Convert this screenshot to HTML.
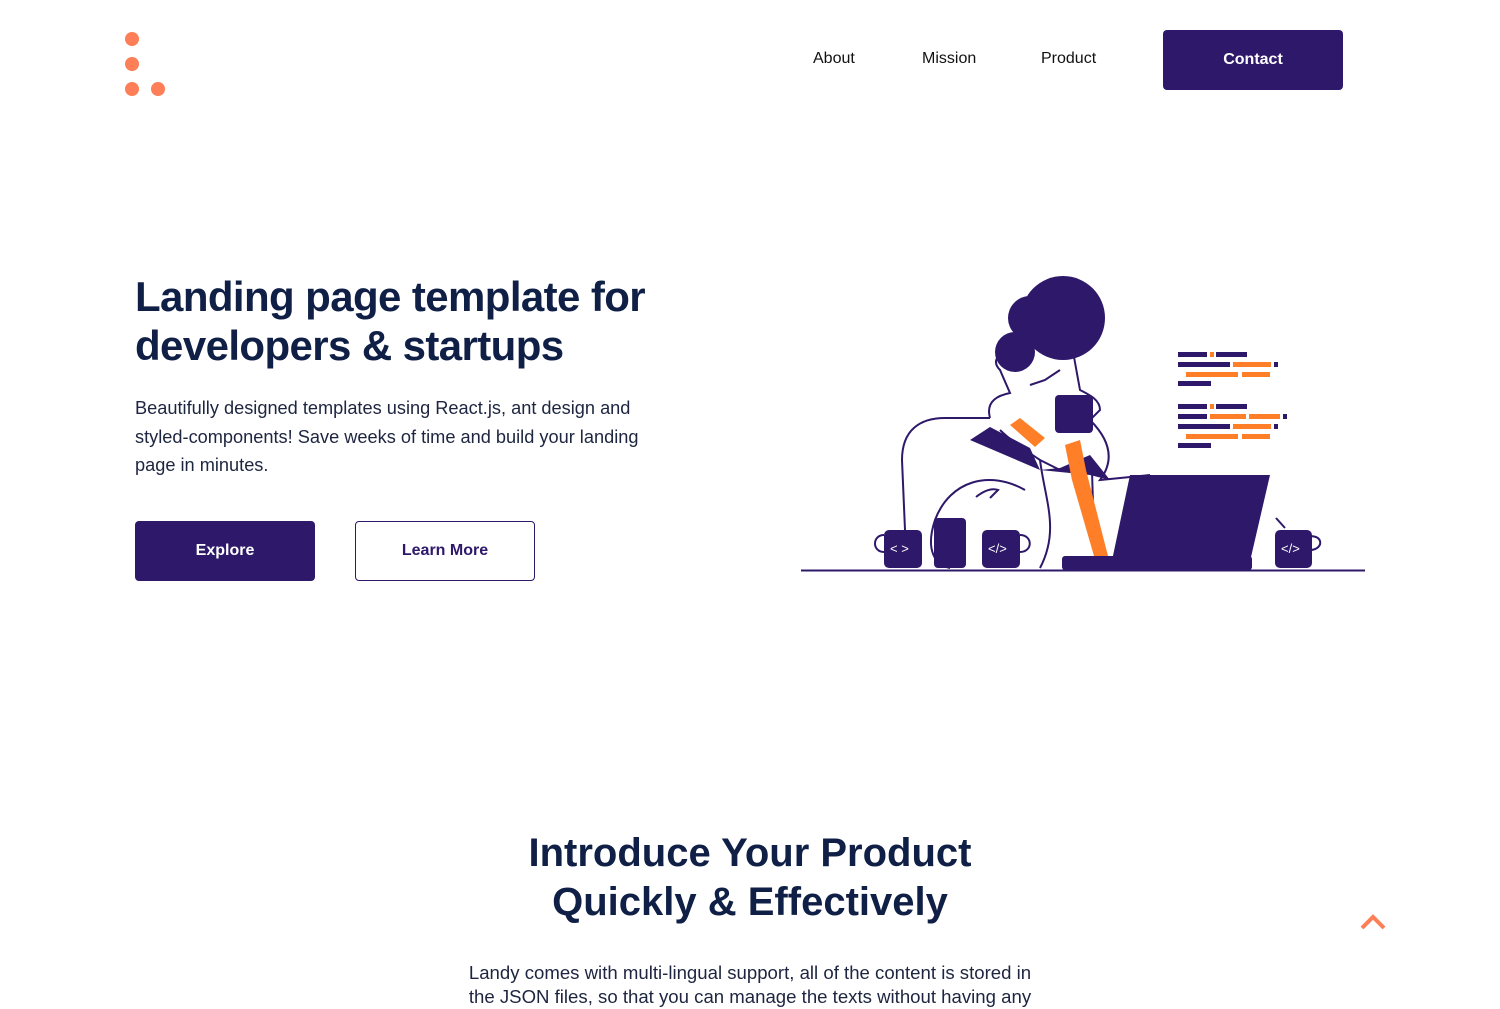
<!DOCTYPE html>
<html><head><meta charset="utf-8"><style>
*{margin:0;padding:0;box-sizing:border-box}
body{width:1500px;height:1000px;overflow:hidden;background:#fff;font-family:"Liberation Sans",sans-serif;position:relative;color:#0f1f45}
.a{position:absolute}
.dot{position:absolute;width:14px;height:14px;border-radius:50%;background:#fe7e58}
.nav{position:absolute;top:50px;font-size:16px;color:#111}
.btn{position:absolute;width:180px;height:60px;border-radius:4px;font-weight:bold;font-size:16px;display:flex;align-items:center;justify-content:center}
h1{position:absolute;left:135px;top:272px;font-size:42px;line-height:49px;color:#0f1f45;font-weight:bold;letter-spacing:-0.6px}
h2{position:absolute;left:0;width:1500px;text-align:center;top:829px;font-size:40px;line-height:49px;color:#0f1f45;font-weight:bold}
p.d{position:absolute;left:135px;top:394px;width:530px;font-size:18.2px;line-height:28.5px;color:#1d2540}
</style></head><body>
<div class="dot" style="left:125px;top:32px"></div>
<div class="dot" style="left:125px;top:57px"></div>
<div class="dot" style="left:125px;top:82px"></div>
<div class="dot" style="left:151px;top:82px"></div>
<div class="nav" style="left:813px">About</div>
<div class="nav" style="left:922px">Mission</div>
<div class="nav" style="left:1041px">Product</div>
<div class="btn" style="left:1163px;top:30px;background:#2e186a;color:#fff">Contact</div>
<h1>Landing page template for<br>developers &amp; startups</h1>
<p class="d">Beautifully designed templates using React.js, ant design and styled-components! Save weeks of time and build your landing page in minutes.</p>
<div class="btn" style="left:135px;top:521px;background:#2e186a;color:#fff">Explore</div>
<div class="btn" style="left:355px;top:521px;border:1px solid #2e186a;color:#2e186a">Learn More</div>
<svg class="a" style="left:0;top:0" width="1500" height="1000">
<g fill="none" stroke="#2e186a" stroke-width="2">
<path d="M1025 490 C990 470 950 480 935 520 C925 550 935 565 950 568"/>
<path d="M905 530 L902 460 C902 430 920 418 945 418 L990 418"/>
<path d="M990 418 C985 400 1000 395 1010 393 L1000 370 C990 360 1000 350 1020 345 L1070 335 L1080 390 C1090 395 1100 400 1100 410 L1090 420 C1110 440 1115 460 1100 480 L1150 475"/>
<path d="M1030 385 L1045 380 L1060 370"/>
<path d="M1000 430 C1010 440 1025 450 1040 460 L1060 470"/>
<path d="M1040 460 C1045 500 1060 530 1040 568"/>
<path d="M976 497 C985 490 992 488 998 490 L990 498"/>
<path d="M1092 470 L1093 505"/>
<path d="M1276 518 L1285 528 M1300 538 C1325 530 1325 550 1310 550"/>
</g>
<path d="M970 440 L990 427 L1030 448 L1040 470 L1060 468 L1090 455 L1110 480 L1090 475 L1040 470 Z" fill="#2e186a"/>
<path d="M1065 445 L1080 440 L1086 470 L1108 556 L1094 556 L1072 480 Z" fill="#fe7f28"/>
<path d="M1010 425 L1020 418 L1045 438 L1035 447 Z" fill="#fe7f28"/>
<circle cx="1063" cy="318" r="42" fill="#2e186a"/>
<circle cx="1030" cy="318" r="22" fill="#2e186a"/>
<circle cx="1015" cy="352" r="20" fill="#2e186a"/>
<rect x="1055" y="395" width="38" height="38" rx="4" fill="#2e186a"/>
<path d="M1130 475 L1270 475 L1248 570 L1110 570 Z" fill="#2e186a"/>
<rect x="1062" y="556" width="190" height="14" rx="3" fill="#2e186a"/>
<rect x="884" y="530" width="38" height="38" rx="5" fill="#2e186a"/>
<path d="M884 535 C872 535 872 552 884 552" fill="none" stroke="#2e186a" stroke-width="2"/>
<rect x="934" y="518" width="32" height="50" rx="4" fill="#2e186a"/>
<rect x="982" y="530" width="38" height="38" rx="5" fill="#2e186a"/>
<path d="M1020 535 C1033 535 1033 552 1020 552" fill="none" stroke="#2e186a" stroke-width="2"/>
<rect x="1275" y="530" width="37" height="38" rx="5" fill="#2e186a"/>
<line x1="801" y1="570.5" x2="1365" y2="570.5" stroke="#2e186a" stroke-width="2"/>
<g fill="#fff" font-size="13" font-family="Liberation Sans"><text x="890" y="553">&lt; &gt;</text><text x="988" y="553">&lt;/&gt;</text><text x="1281" y="553">&lt;/&gt;</text></g>
<g fill="#2e186a"><rect x="1178" y="352" width="29" height="5"/><rect x="1216" y="352" width="31" height="5"/><rect x="1178" y="362" width="52" height="5"/><rect x="1274" y="362" width="4" height="5"/><rect x="1178" y="381" width="33" height="5"/>
<rect x="1178" y="404" width="29" height="5"/><rect x="1216" y="404" width="31" height="5"/><rect x="1178" y="414" width="29" height="5"/><rect x="1283" y="414" width="4" height="5"/><rect x="1178" y="424" width="52" height="5"/><rect x="1274" y="424" width="4" height="5"/><rect x="1178" y="443" width="33" height="5"/></g>
<g fill="#fe7f28"><rect x="1210" y="352" width="4" height="5"/><rect x="1233" y="362" width="38" height="5"/><rect x="1186" y="372" width="52" height="5"/><rect x="1242" y="372" width="28" height="5"/>
<rect x="1210" y="404" width="4" height="5"/><rect x="1210" y="414" width="36" height="5"/><rect x="1249" y="414" width="31" height="5"/><rect x="1233" y="424" width="38" height="5"/><rect x="1186" y="434" width="52" height="5"/><rect x="1242" y="434" width="28" height="5"/></g>
<path d="M1362 928 L1373 917 L1384 928" fill="none" stroke="#fe7e58" stroke-width="4"/>
</svg>
<h2>Introduce Your Product<br>Quickly &amp; Effectively</h2>
<p class="a" style="left:0;width:1500px;text-align:center;top:961px;font-size:18.6px;line-height:24px;color:#1d2540">Landy comes with multi-lingual support, all of the content is stored in<br>the JSON files, so that you can manage the texts without having any</p>
</body></html>
